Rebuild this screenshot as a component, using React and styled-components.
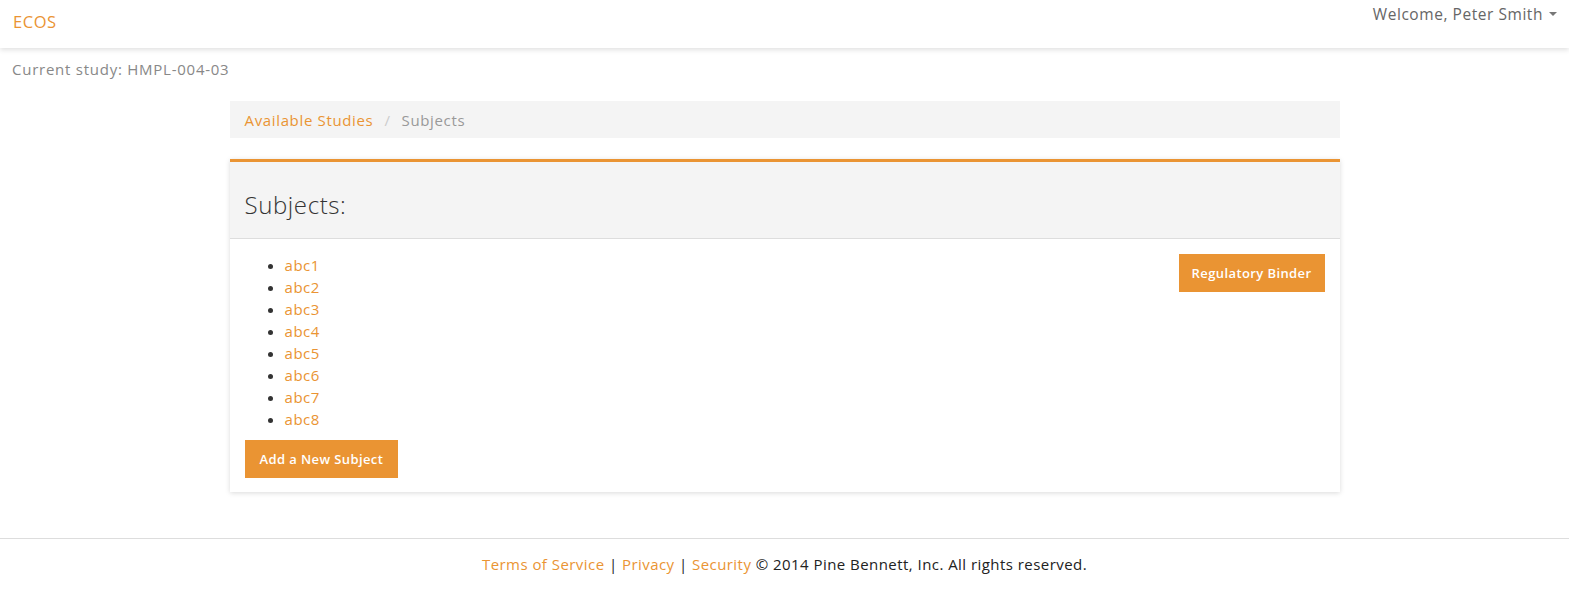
import React from 'react';
import styled, { createGlobalStyle } from 'styled-components';

const orange = '#ea9433';

const GlobalStyle = createGlobalStyle`
  body {
    margin: 0;
    font-family: "Open Sans", Lato, sans-serif;
    font-size: 15px;
    letter-spacing: 0.55px;
    color: #333;
    background: #fff;
  }
  a { color: ${orange}; text-decoration: none; }
`;

export default function App() {
  return (
    <>
      <GlobalStyle />
      <NavBar>
        <Brand href="#">ECOS</Brand>
        <UserMenu>
          Welcome, Peter Smith <Caret />
        </UserMenu>
      </NavBar>
      <StudyLine>Current study: HMPL-004-03</StudyLine>
      <Container>
        <Breadcrumb>
          <a href="#">Available Studies</a>
          <Divider>/</Divider>
          <Active>Subjects</Active>
        </Breadcrumb>
        <Panel>
          <PanelHeading>Subjects:</PanelHeading>
          <PanelBody>
            <div>
              <SubjectList>
                {['abc1', 'abc2', 'abc3', 'abc4', 'abc5', 'abc6', 'abc7', 'abc8'].map((s) => (
                  <li key={s}><a href="#">{s}</a></li>
                ))}
              </SubjectList>
              <Button $pad={15}>Add a New Subject</Button>
            </div>
            <Button $pad={13}>Regulatory Binder</Button>
          </PanelBody>
        </Panel>
      </Container>
      <Footer>
        <a href="#">Terms of Service</a> | <a href="#">Privacy</a> | <a href="#">Security</a> © 2014 Pine Bennett, Inc. All rights reserved.
      </Footer>
    </>
  );
}

const NavBar = styled.div`
  height: 48px;
  display: flex;
  justify-content: space-between;
  align-items: flex-start;
  padding: 0 13px;
  background: #fff;
  box-shadow: 0 2px 5px rgba(0, 0, 0, 0.12);
`;

const Brand = styled.a`
  font-size: 16.5px;
  line-height: 20px;
  margin-top: 12px;
`;

const UserMenu = styled.div`
  font-size: 15.5px;
  line-height: 20px;
  margin-top: 4px;
  margin-right: -1px;
  color: #666;
  display: flex;
  align-items: center;
  gap: 6px;
`;

const Caret = styled.span`
  display: inline-block;
  width: 0;
  height: 0;
  border-left: 4px solid transparent;
  border-right: 4px solid transparent;
  border-top: 4px solid #777;
`;

const StudyLine = styled.div`
  padding: 11px 12px 0;
  line-height: 20px;
  color: #888;
  letter-spacing: 0.75px;
`;

const Container = styled.div`
  width: 1110px;
  margin: 22px auto 0;
`;

const Breadcrumb = styled.div`
  background: #f4f4f4;
  height: 37px;
  padding: 0 15px;
  display: flex;
  align-items: center;
  font-size: 15px;
  letter-spacing: 0.65px;
`;

const Divider = styled.span`
  color: #ccc;
  padding: 0 11px;
`;

const Active = styled.span`
  color: #999;
`;

const Panel = styled.div`
  margin-top: 21px;
  border-top: 3px solid ${orange};
  background: #fff;
  box-shadow: 0 1px 5px rgba(0, 0, 0, 0.15);
`;

const PanelHeading = styled.h3`
  margin: 0;
  background: #f4f4f4;
  border-bottom: 1px solid #ddd;
  height: 77px;
  box-sizing: border-box;
  padding: 28px 15px 0;
  font-size: 24px;
  font-weight: 300;
  color: #333;
  line-height: 30px;
  letter-spacing: 0.6px;
`;

const PanelBody = styled.div`
  padding: 15px 15px 14px;
  display: flex;
  justify-content: space-between;
  align-items: flex-start;
`;

const SubjectList = styled.ul`
  margin: 0 0 10px;
  padding-left: 40px;
  line-height: 22px;
  font-size: 15px;
  li::marker { color: #333; }
`;

const Button = styled.button`
  background: ${orange};
  color: #fff;
  border: none;
  border-radius: 0;
  height: 38px;
  padding: 0 ${(p) => p.$pad}px;
  font-family: inherit;
  font-size: 13px;
  font-weight: 600;
  letter-spacing: 0.4px;
  cursor: pointer;
`;

const Footer = styled.div`
  margin-top: 46px;
  border-top: 1px solid #ddd;
  padding-top: 15px;
  text-align: center;
  font-size: 15px;
  line-height: 20px;
  color: #222;
  letter-spacing: 0.45px;
`;
